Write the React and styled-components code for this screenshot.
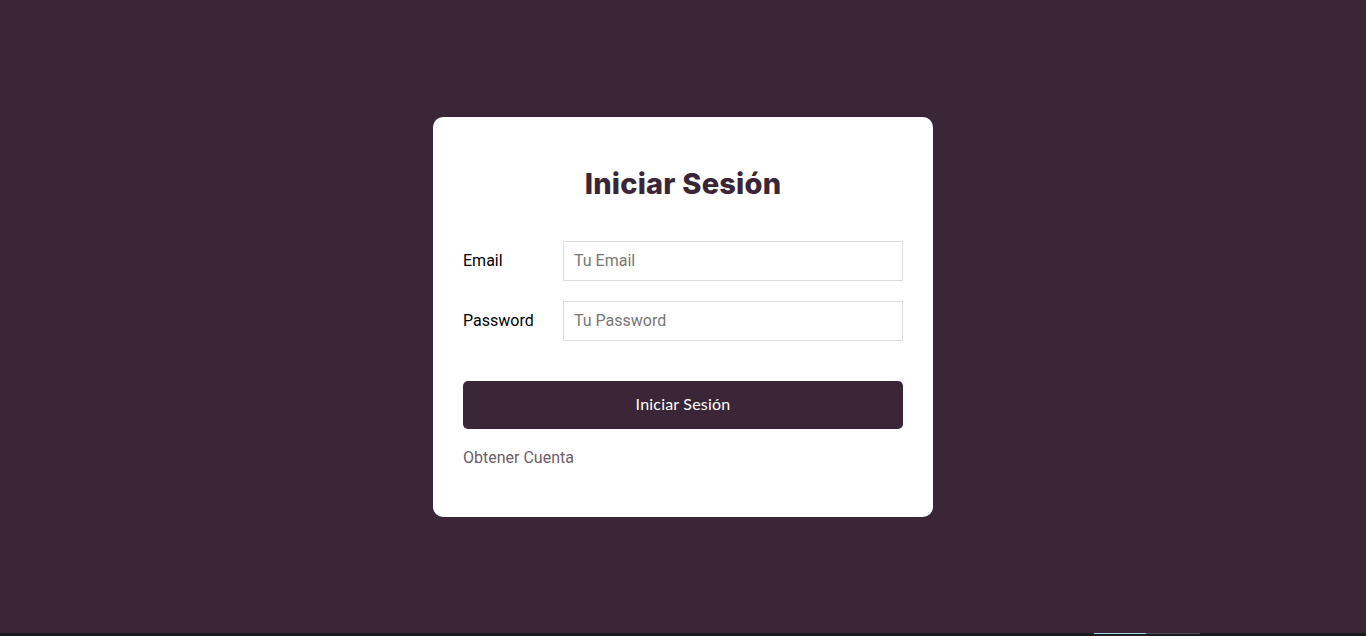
import React from 'react';
import styled, { createGlobalStyle } from 'styled-components';

const GlobalStyle = createGlobalStyle`
	html, body {
		margin: 0;
		padding: 0;
		background-color: #3b2637;
	}

	* {
		box-sizing: border-box;
	}
`;

const Page = styled.div`
	display: flex;
	flex-direction: column;
	height: 636px;
	width: 100%;
	background-color: #3b2637;
	font-family: Roboto, 'Liberation Sans', sans-serif;
`;

const Main = styled.main`
	flex: 1;
	display: flex;
	align-items: center;
	justify-content: center;
	padding-top: 1px;
`;

const Card = styled.div`
	width: 500px;
	height: 400px;
	background-color: #fff;
	border-radius: 10px;
	padding: 30px;
	display: flex;
	flex-direction: column;
`;

const Title = styled.h1`
	margin: 19px 0 39px;
	font-family: Inter, Lato, sans-serif;
	font-weight: 800;
	font-size: 29px;
	line-height: 36px;
	text-align: center;
	color: #3b2637;
	letter-spacing: 0.2px;
`;

const Field = styled.div`
	display: flex;
	align-items: center;
	margin-bottom: 20px;

	&:last-of-type {
		margin-bottom: 40px;
	}
`;

const Label = styled.label`
	width: 100px;
	padding-bottom: 2px;
	font-size: 16px;
	color: #000;
`;

const Input = styled.input`
	flex: 1;
	height: 40px;
	padding: 0 10px 1px;
	border: 1px solid #ddd;
	font-family: Roboto, 'Liberation Sans', sans-serif;
	font-size: 16px;
	color: #222;
	outline: none;

	&::placeholder {
		color: #777;
	}
`;

const Submit = styled.button`
	width: 100%;
	height: 48px;
	padding-bottom: 4px;
	border: none;
	border-radius: 5px;
	background-color: #3b2637;
	color: #fff;
	font-family: Lato, 'Open Sans', sans-serif;
	font-size: 16px;
	font-weight: 400;
	letter-spacing: 0.2px;
	cursor: pointer;
`;

const Link = styled.a`
	display: block;
	margin-top: 20px;
	font-size: 16px;
	line-height: 18px;
	color: #6f5b6b;
	text-decoration: none;
`;

const Taskbar = styled.div`
	height: 3px;
	background-color: #181c1e;
	display: flex;
	padding-left: 1094px;
`;

const TaskItem = styled.div`
	width: ${props => props.w}px;
	height: 3px;
	border-top: 1px solid ${props => props.active ? '#9fd3e0' : '#4a4f52'};
`;

const App = () => {

	const handleSubmit = (e) => {
		e.preventDefault();
	};

	return (
		<Page>
			<GlobalStyle />
			<Main>
				<Card>
					<Title>Iniciar Sesión</Title>
					<form onSubmit={e => handleSubmit(e)}>
						<Field>
							<Label htmlFor='email'>Email</Label>
							<Input id='email' type='email' placeholder='Tu Email' />
						</Field>
						<Field>
							<Label htmlFor='password'>Password</Label>
							<Input id='password' type='password' placeholder='Tu Password' />
						</Field>
						<Submit type='submit'>Iniciar Sesión</Submit>
					</form>
					<Link href='#'>Obtener Cuenta</Link>
				</Card>
			</Main>
			<Taskbar>
				<TaskItem w={52} active />
				<TaskItem w={54} />
			</Taskbar>
		</Page>
	);
};

export default App;
